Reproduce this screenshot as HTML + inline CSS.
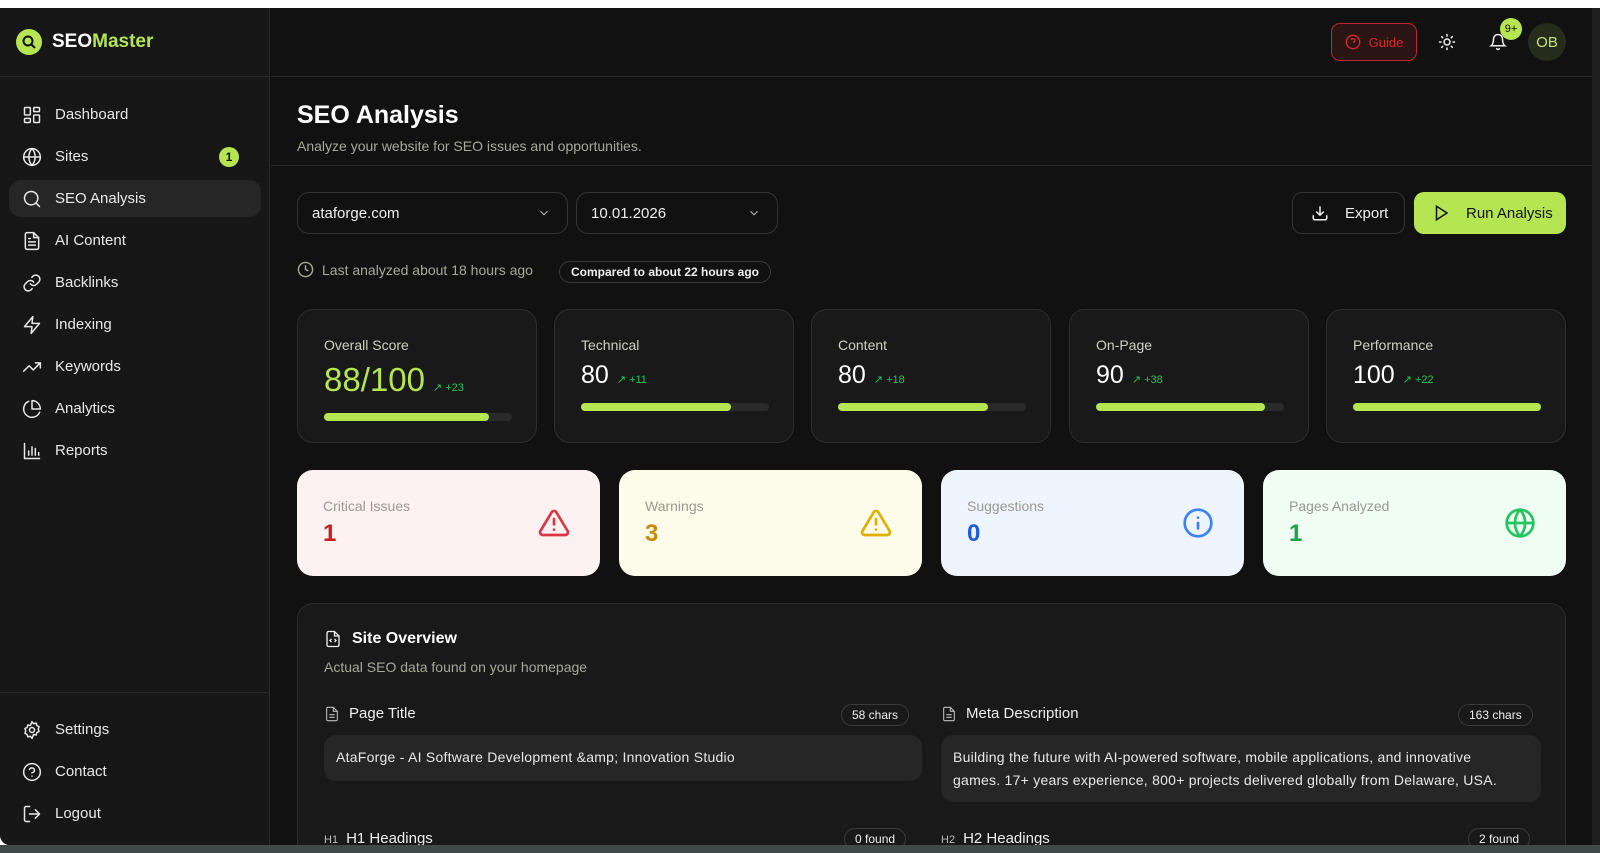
<!DOCTYPE html>
<html><head><meta charset="utf-8"><style>
*{box-sizing:border-box;margin:0;padding:0}
body{width:1600px;height:853px;overflow:hidden;background:#fff;font-family:"Liberation Sans",sans-serif;color:#eee;position:relative}
.desk{position:absolute;left:0;top:845px;width:1600px;height:8px;background:#3d4a48}
.win{position:absolute;left:0;top:8px;width:1600px;height:837px;background:#111;border-radius:0 0 0 10px;overflow:hidden}
.sb{position:absolute;left:0;top:0;width:270px;height:840px;background:#171717;border-right:1px solid #2a2a2a}
.logo{height:69px;border-bottom:1px solid #2a2a2a;display:flex;align-items:center;padding-left:16px}
.logo .c{width:26px;height:26px;border-radius:50%;background:#b5e550;display:flex;align-items:center;justify-content:center;margin-right:10px}
.logo b{font-size:19px;color:#fff}.logo b span{color:#b5e550}
.nav{position:absolute;left:9px;width:252px;height:37px;border-radius:12px;display:flex;align-items:center;padding-left:13px;font-size:15px;color:#e8e8e8}
.nav svg{width:20px;height:20px;margin-right:13px;stroke:#e8e8e8;fill:none;stroke-width:1.8;stroke-linecap:round;stroke-linejoin:round}
.act{background:#262626}
.badge1{position:absolute;right:22px;width:20px;height:20px;border-radius:50%;background:#b5e550;color:#111;font-size:12px;font-weight:bold;display:flex;align-items:center;justify-content:center}
.main{position:absolute;left:271px;top:0;width:1321px;height:837px;overflow:hidden}
.scroll{position:absolute;left:1592px;top:0;width:8px;height:837px;background:#1e1e1e}
.top{height:69px;border-bottom:1px solid #2a2a2a;position:relative}
.ph{height:89px;border-bottom:1px solid #2a2a2a;padding:24px 0 0 26px}
.ph h1{font-size:25px;font-weight:600;color:#fff}
.ph p{font-size:14px;color:#a8a89a;margin-top:8px}
.abs{position:absolute}
.sel{position:absolute;top:184px;height:42px;border:1px solid #333;border-radius:12px;display:flex;align-items:center;padding-left:14px;font-size:15px;color:#eee}
.btn{position:absolute;top:184px;height:42px;border-radius:10px;display:flex;align-items:center;font-size:15px}
.card{position:absolute;top:301px;width:240px;height:134px;border:1px solid #2e2e2e;border-radius:16px;background:#191919;padding:27px 0 0 26px}
.card .l{font-size:14px;color:#cfcfc4}
.card .v{font-size:25px;color:#fff;margin-top:8px;display:flex;align-items:baseline}
.card .d{font-size:11px;color:#22c55e;margin-left:8px}
.bar{position:absolute;left:26px;top:103px;width:188px;height:8px;border-radius:4px;background:#2a2a2a}
.bar i{display:block;height:8px;border-radius:4px;background:#b5e550}
.ic{position:absolute;top:462px;width:303px;height:106px;border-radius:16px;padding:28px 0 0 26px}
.ic .l{font-size:14px;color:#9a9a90}
.ic .n{font-size:24px;font-weight:bold;margin-top:6px}
.ic svg{position:absolute;right:30px;top:37px;width:32px;height:32px;fill:none;stroke-width:2;stroke-linecap:round;stroke-linejoin:round}
.ov{position:absolute;left:26px;top:595px;width:1269px;height:245px;border:1px solid #2e2e2e;border-radius:16px 16px 0 0;border-bottom:none;background:#191919}
.pill{position:absolute;height:22px;border:1px solid #3a3a3a;border-radius:11px;font-size:12px;padding:0 10px;display:flex;align-items:center;color:#eee}
.box{position:absolute;background:#262626;border-radius:12px;font-size:14px;color:#e8e8e8;padding:0 12px;line-height:23px;letter-spacing:0.25px}
.sm{stroke:#bbb;fill:none;stroke-width:1.6}
</style></head><body>
<div class="desk"></div>
<div class="win">
<div class="sb">
 <div class="logo"><div class="c"><svg width="16" height="16" viewBox="0 0 16 16"><circle cx="7" cy="7" r="4.5" fill="none" stroke="#111" stroke-width="2"/><path d="M10.5 10.5L14 14" stroke="#111" stroke-width="2"/></svg></div><b>SEO<span>Master</span></b></div>
 <div class="nav" style="top:88px"><svg viewBox="0 0 24 24"><rect x="3" y="3" width="7" height="9" rx="1"/><rect x="14" y="3" width="7" height="5" rx="1"/><rect x="14" y="12" width="7" height="9" rx="1"/><rect x="3" y="16" width="7" height="5" rx="1"/></svg>Dashboard</div>
 <div class="nav" style="top:130px"><svg viewBox="0 0 24 24"><circle cx="12" cy="12" r="10"/><path d="M2 12h20M12 2a15 15 0 0 1 0 20M12 2a15 15 0 0 0 0 20"/></svg>Sites<span class="badge1">1</span></div>
 <div class="nav act" style="top:172px"><svg viewBox="0 0 24 24"><circle cx="11" cy="11" r="8"/><path d="M21 21l-4.3-4.3"/></svg>SEO Analysis</div>
 <div class="nav" style="top:214px"><svg viewBox="0 0 24 24"><path d="M14 2H6a2 2 0 0 0-2 2v16a2 2 0 0 0 2 2h12a2 2 0 0 0 2-2V8z"/><path d="M14 2v6h6M16 13H8M16 17H8M10 9H8"/></svg>AI Content</div>
 <div class="nav" style="top:256px"><svg viewBox="0 0 24 24"><path d="M10 13a5 5 0 0 0 7.5.5l3-3a5 5 0 0 0-7-7l-1.7 1.7"/><path d="M14 11a5 5 0 0 0-7.5-.5l-3 3a5 5 0 0 0 7 7l1.7-1.7"/></svg>Backlinks</div>
 <div class="nav" style="top:298px"><svg viewBox="0 0 24 24"><path d="M13 2L3 14h9l-1 8 10-12h-9z"/></svg>Indexing</div>
 <div class="nav" style="top:340px"><svg viewBox="0 0 24 24"><path d="M22 7l-8.5 8.5-5-5L2 17M16 7h6v6"/></svg>Keywords</div>
 <div class="nav" style="top:382px"><svg viewBox="0 0 24 24"><path d="M21.2 15.9A10 10 0 1 1 8 2.8"/><path d="M22 12A10 10 0 0 0 12 2v10z"/></svg>Analytics</div>
 <div class="nav" style="top:424px"><svg viewBox="0 0 24 24"><path d="M3 3v18h18M8 17v-5M12 17V7M16 17v-8M20 17v-3"/></svg>Reports</div>
 <div style="position:absolute;left:0;top:684px;width:270px;border-top:1px solid #2a2a2a"></div>
 <div class="nav" style="top:703px"><svg viewBox="0 0 24 24"><circle cx="12" cy="12" r="3"/><path d="M12 2l2 2.5 3-.8.8 3 2.7 1.3-1 2.9 1 2.9-2.7 1.3-.8 3-3-.8L12 22l-2-2.5-3 .8-.8-3-2.7-1.3 1-2.9-1-2.9 2.7-1.3.8-3 3 .8z"/></svg>Settings</div>
 <div class="nav" style="top:745px"><svg viewBox="0 0 24 24"><circle cx="12" cy="12" r="10"/><path d="M9.1 9a3 3 0 0 1 5.8 1c0 2-3 3-3 3M12 17h.01"/></svg>Contact</div>
 <div class="nav" style="top:787px"><svg viewBox="0 0 24 24"><path d="M9 21H5a2 2 0 0 1-2-2V5a2 2 0 0 1 2-2h4M16 17l5-5-5-5M21 12H9"/></svg>Logout</div>
</div>
<div class="main">
 <div class="top">
  <div class="abs" style="left:1060px;top:15px;width:86px;height:38px;border:1px solid #c0262d;border-radius:9px;background:#2a1414;display:flex;align-items:center;justify-content:center;color:#e0262d;font-size:13px"><svg width="16" height="16" viewBox="0 0 24 24" fill="none" stroke="#e0262d" stroke-width="2" style="margin-right:8px"><circle cx="12" cy="12" r="10"/><path d="M9.1 9a3 3 0 0 1 5.8 1c0 2-3 3-3 3M12 17h.01"/></svg>Guide</div>
  <svg class="abs" style="left:1167px;top:25px" width="18" height="18" viewBox="0 0 24 24" fill="none" stroke="#eee" stroke-width="2" stroke-linecap="round"><circle cx="12" cy="12" r="4"/><path d="M12 2v2M12 20v2M4.9 4.9l1.4 1.4M17.7 17.7l1.4 1.4M2 12h2M20 12h2M6.3 17.7l-1.4 1.4M19.1 4.9l-1.4 1.4"/></svg>
  <svg class="abs" style="left:1218px;top:25px" width="18" height="18" viewBox="0 0 24 24" fill="none" stroke="#eee" stroke-width="2" stroke-linecap="round"><path d="M6 8a6 6 0 0 1 12 0c0 7 3 9 3 9H3s3-2 3-9M10.3 21a1.9 1.9 0 0 0 3.4 0"/></svg>
  <div class="abs" style="left:1229px;top:10px;width:22px;height:22px;border-radius:50%;background:#b5e550;color:#111;font-size:11px;display:flex;align-items:center;justify-content:center">9+</div>
  <div class="abs" style="left:1257px;top:15px;width:38px;height:38px;border-radius:50%;background:#262d1d;color:#c3e27a;font-size:15px;display:flex;align-items:center;justify-content:center">OB</div>
 </div>
 <div class="ph"><h1>SEO Analysis</h1><p>Analyze your website for SEO issues and opportunities.</p></div>
 <div class="sel" style="left:26px;width:271px">ataforge.com<svg style="position:absolute;right:16px" width="14" height="14" viewBox="0 0 24 24" fill="none" stroke="#aaa" stroke-width="2"><path d="M6 9l6 6 6-6"/></svg></div>
 <div class="sel" style="left:305px;width:202px">10.01.2026<svg style="position:absolute;right:16px" width="14" height="14" viewBox="0 0 24 24" fill="none" stroke="#aaa" stroke-width="2"><path d="M6 9l6 6 6-6"/></svg></div>
 <div class="btn" style="left:1021px;width:113px;border:1px solid #333;color:#eee;padding-left:18px"><svg width="18" height="18" viewBox="0 0 24 24" fill="none" stroke="#eee" stroke-width="2" style="margin-right:16px"><path d="M21 15v4a2 2 0 0 1-2 2H5a2 2 0 0 1-2-2v-4M7 10l5 5 5-5M12 15V3"/></svg>Export</div>
 <div class="btn" style="left:1143px;width:152px;background:#b5e550;color:#111;padding-left:18px"><svg width="18" height="18" viewBox="0 0 24 24" fill="none" stroke="#111" stroke-width="2" style="margin-right:16px"><path d="M6 3l14 9-14 9z"/></svg>Run Analysis</div>
 <div class="abs" style="left:26px;top:253px;display:flex;align-items:center;font-size:14px;color:#a8a89a"><svg width="17" height="17" viewBox="0 0 24 24" fill="none" stroke="#a8a89a" stroke-width="2" style="margin-right:8px"><circle cx="12" cy="12" r="10"/><path d="M12 6v6l4 2"/></svg>Last analyzed about 18 hours ago</div>
 <div class="pill" style="left:288px;top:253px;height:22px;font-size:12px;font-weight:bold;padding:0 11px">Compared to about 22 hours ago</div>

 <div class="card" style="left:26px"><div class="l">Overall Score</div><div class="v" style="font-size:33px;color:#b5e550">88/100<span class="d">↗ +23</span></div><div class="bar"><i style="width:88%"></i></div></div>
 <div class="card" style="left:283px"><div class="l">Technical</div><div class="v">80<span class="d">↗ +11</span></div><div class="bar" style="top:93px"><i style="width:80%"></i></div></div>
 <div class="card" style="left:540px"><div class="l">Content</div><div class="v">80<span class="d">↗ +18</span></div><div class="bar" style="top:93px"><i style="width:80%"></i></div></div>
 <div class="card" style="left:798px"><div class="l">On-Page</div><div class="v">90<span class="d">↗ +38</span></div><div class="bar" style="top:93px"><i style="width:90%"></i></div></div>
 <div class="card" style="left:1055px"><div class="l">Performance</div><div class="v">100<span class="d">↗ +22</span></div><div class="bar" style="top:93px"><i style="width:100%"></i></div></div>

 <div class="ic" style="left:26px;background:#fdf1f1"><div class="l">Critical Issues</div><div class="n" style="color:#c81e1e">1</div><svg viewBox="0 0 24 24" stroke="#dc3545"><path d="M10.3 3.9L1.8 18a2 2 0 0 0 1.7 3h17a2 2 0 0 0 1.7-3L13.7 3.9a2 2 0 0 0-3.4 0zM12 9v4M12 17h.01"/></svg></div>
 <div class="ic" style="left:348px;background:#fdfbea"><div class="l">Warnings</div><div class="n" style="color:#c88a0a">3</div><svg viewBox="0 0 24 24" stroke="#e0b000"><path d="M10.3 3.9L1.8 18a2 2 0 0 0 1.7 3h17a2 2 0 0 0 1.7-3L13.7 3.9a2 2 0 0 0-3.4 0zM12 9v4M12 17h.01"/></svg></div>
 <div class="ic" style="left:670px;background:#eef5ff"><div class="l">Suggestions</div><div class="n" style="color:#1d5fd6">0</div><svg viewBox="0 0 24 24" stroke="#3b82f6"><circle cx="12" cy="12" r="10"/><path d="M12 16v-4M12 8h.01"/></svg></div>
 <div class="ic" style="left:992px;background:#effdf3"><div class="l">Pages Analyzed</div><div class="n" style="color:#16a34a">1</div><svg viewBox="0 0 24 24" stroke="#22c55e"><circle cx="12" cy="12" r="10"/><path d="M2 12h20M12 2a15 15 0 0 1 0 20M12 2a15 15 0 0 0 0 20"/></svg></div>

 <div class="ov">
  <div class="abs" style="left:26px;top:26px;display:flex;align-items:center;font-size:16px;font-weight:600;color:#fff"><svg width="18" height="18" viewBox="0 0 24 24" fill="none" stroke="#eee" stroke-width="1.8" style="margin-right:10px"><path d="M14 2H6a2 2 0 0 0-2 2v16a2 2 0 0 0 2 2h12a2 2 0 0 0 2-2V8z"/><path d="M14 2v6h6M10 12l-2 2 2 2M14 12l2 2-2 2"/></svg>Site Overview</div>
  <div class="abs" style="left:26px;top:55px;font-size:14px;color:#a8a89a">Actual SEO data found on your homepage</div>
  <div class="abs" style="left:26px;top:101px;display:flex;align-items:center;font-size:15px;color:#eee"><svg width="16" height="16" viewBox="0 0 24 24" class="sm" style="margin-right:9px"><path d="M14 2H6a2 2 0 0 0-2 2v16a2 2 0 0 0 2 2h12a2 2 0 0 0 2-2V8z"/><path d="M14 2v6h6M16 13H8M16 17H8"/></svg>Page Title</div>
  <div class="pill" style="left:543px;top:100px">58 chars</div>
  <div class="box" style="left:26px;top:131px;width:598px;height:46px;padding-top:11px">AtaForge - AI Software Development &amp;amp; Innovation Studio</div>
  <div class="abs" style="left:643px;top:101px;display:flex;align-items:center;font-size:15px;color:#eee"><svg width="16" height="16" viewBox="0 0 24 24" class="sm" style="margin-right:9px"><path d="M14 2H6a2 2 0 0 0-2 2v16a2 2 0 0 0 2 2h12a2 2 0 0 0 2-2V8z"/><path d="M14 2v6h6M16 13H8M16 17H8"/></svg>Meta Description</div>
  <div class="pill" style="left:1160px;top:100px">163 chars</div>
  <div class="box" style="left:643px;top:131px;width:600px;height:67px;padding:11px 40px 0 12px">Building the future with AI-powered software, mobile applications, and innovative games. 17+ years experience, 800+ projects delivered globally from Delaware, USA.</div>
  <div class="abs" style="left:26px;top:226px;font-size:15px;color:#eee"><span style="font-size:11px;color:#bbb;margin-right:8px">H1</span>H1 Headings</div>
  <div class="pill" style="left:546px;top:224px">0 found</div>
  <div class="abs" style="left:643px;top:226px;font-size:15px;color:#eee"><span style="font-size:11px;color:#bbb;margin-right:8px">H2</span>H2 Headings</div>
  <div class="pill" style="left:1170px;top:224px">2 found</div>
 </div>
</div>
<div class="scroll"></div>
</div>
</body></html>
